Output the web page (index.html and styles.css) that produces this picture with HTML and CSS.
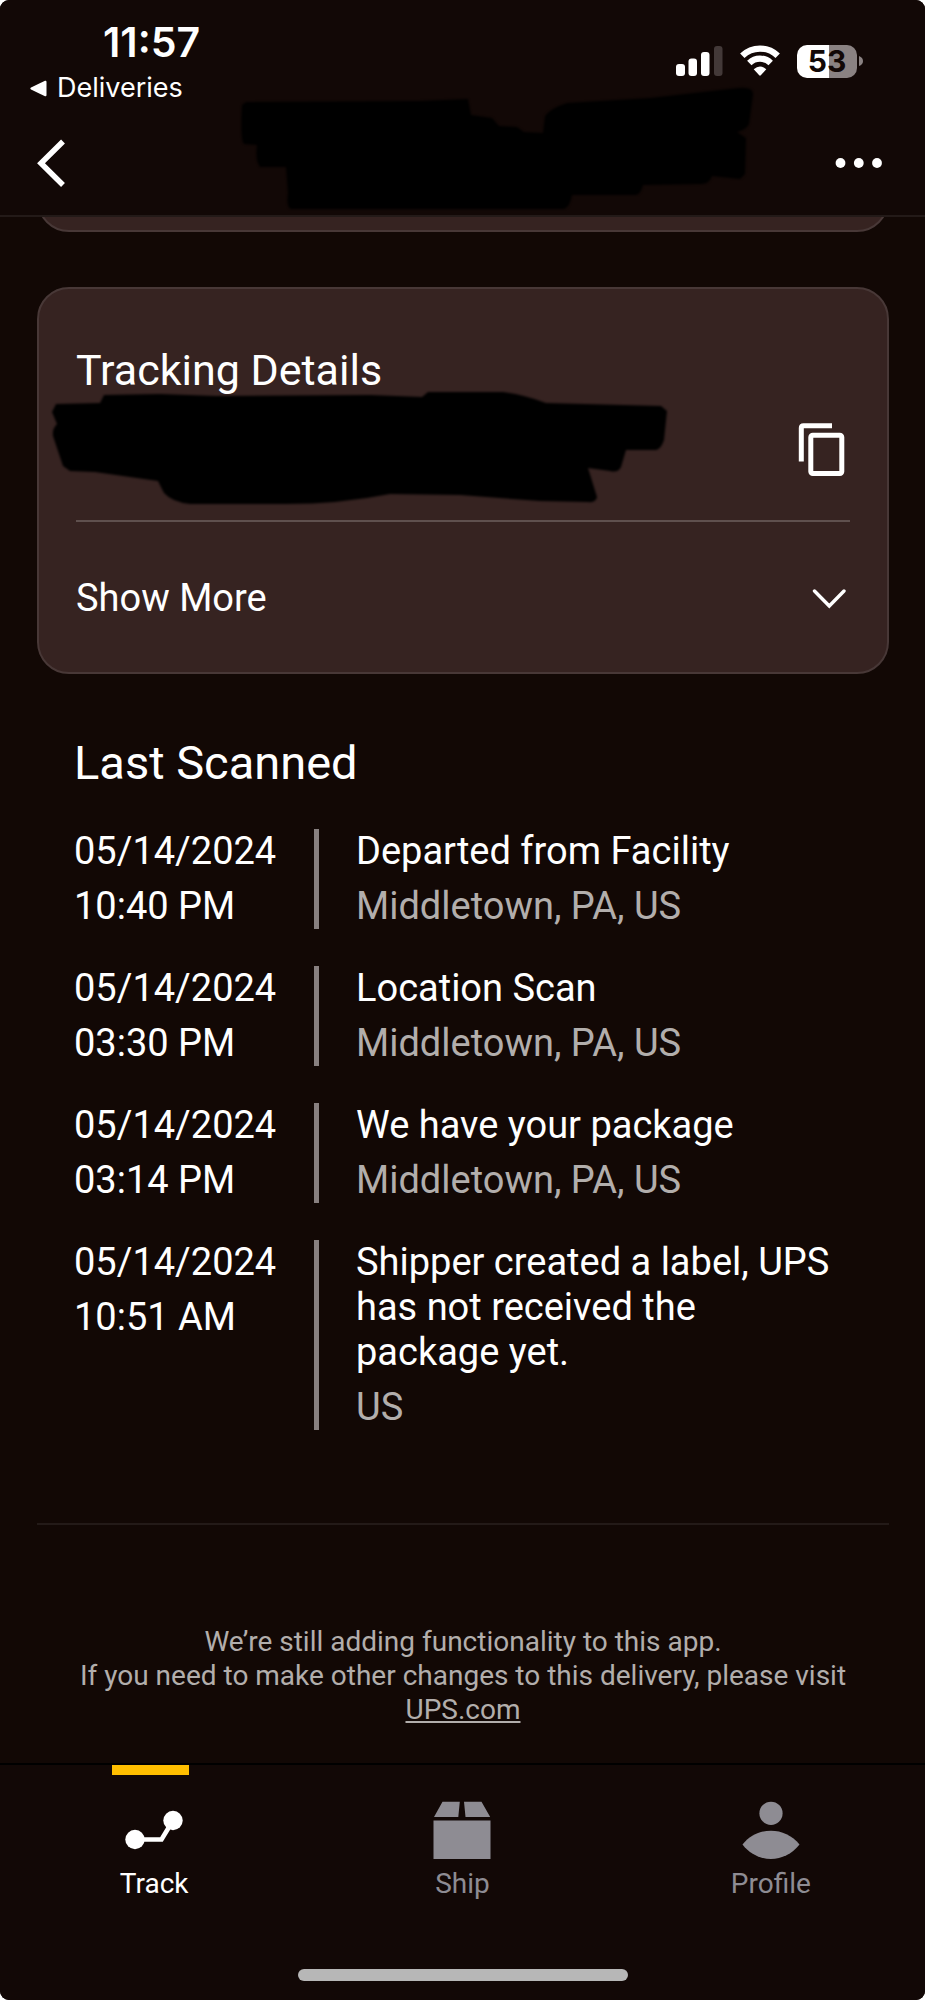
FILE: index.html
```html
<!DOCTYPE html>
<html lang="en">
<head>
<meta charset="utf-8">
<meta name="viewport" content="width=device-width, initial-scale=1">
<title>Tracking Details</title>
<link rel="stylesheet" href="styles.css">
</head>
<body>
<div class="app">
  <header class="header">
    <div class="status">
      <div class="status-left">
        <span class="clock">11:57</span>
        <a class="return-link" href="#">
          <svg width="17" height="17" viewBox="0 0 17 17" aria-hidden="true"><path d="M1 7.6 15 .8Q16.5.3 16.5 2v13q0 1.700-1.500 1.200L1 9.400Q-.4 8.500 1 7.600Z" fill="#fff"/></svg>
          Deliveries
        </a>
      </div>
      <div class="status-icons">
        <svg width="47" height="32" viewBox="0 0 47 32" aria-hidden="true">
          <g fill="#fff"><rect x="0" y="19" width="9" height="12" rx="3"/><rect x="12.500" y="13.500" width="8.500" height="17.500" rx="3"/><rect x="25" y="7" width="8.500" height="24" rx="3"/></g>
          <rect x="38" y="1" width="8.500" height="30" rx="3" fill="#433938"/>
        </svg>
        <svg width="40" height="32" viewBox="0 0 40 32" aria-hidden="true">
          <g fill="none" stroke="#fff" stroke-width="6.300"><path d="M2.300 10.700A25.500 25.500 0 0 1 37.700 10.700"/><path d="M9.300 18A15.400 15.400 0 0 1 30.700 18"/></g>
          <path d="M13.700 24.300Q20 18.700 26.300 24.300L20.800 30.300Q20 31.200 19.200 30.300Z" fill="#fff"/>
        </svg>
        <div class="battery">
          <span class="battery-body">53</span>
          <svg width="4" height="12" viewBox="0 0 4 12" aria-hidden="true"><path d="M0 1Q4 2.500 4 6T0 11Z" fill="#8a8282"/></svg>
        </div>
      </div>
    </div>
    <nav class="nav">
      <button class="icon-button" type="button" aria-label="Back">
        <svg width="29" height="48" viewBox="0 0 29 48" aria-hidden="true"><path d="M26 2.500 4 24.200 26 46" fill="none" stroke="#fff" stroke-width="5.500"/></svg>
      </button>
      <button class="icon-button" type="button" aria-label="More options">
        <svg width="48" height="12" viewBox="0 0 48 12" aria-hidden="true"><g fill="#fff"><circle cx="5.500" cy="6" r="4.900"/><circle cx="23.800" cy="6" r="4.900"/><circle cx="42" cy="6" r="4.900"/></g></svg>
      </button>
    </nav>
    <svg class="mask mask-header" width="525" height="136" viewBox="235 80 525 136" aria-hidden="true">
      <path d="M246 101 420 100 468 98 471 114 492 117 499 125 517 126 524 131 543 132 545 115Q551 107 567 102L650 97 738 87Q754 85 753 94L749 123Q746 129 737 131L746 137 745 173 740 178 712 175Q710 182 702 183L643 184Q641 193 636 194L572 194Q570 206 564 208L291 208Q286 206 288 192L286 166 260 166Q255 160 257 144L244 143Q240 139 242 104Z"/>
    </svg>
  </header>

  <main class="content">
    <div class="card card-previous"></div>

    <section class="card details">
      <h2 class="details-title">Tracking Details</h2>
      <div class="number-row">
        <svg class="mask mask-number" width="635" height="130" viewBox="45 384 635 130" aria-hidden="true">
          <path d="M56 404 100 403 104 395 160 394 215 396 370 395 422 397 428 392 503 392Q525 395 546 403L661 406 667 411 664 440Q661 449 656 450L626 450 621 467Q618 473 610 471L588 468 597 497Q596 503 588 502L540 501 460 495 390 494Q340 504 285 504L190 504Q172 502 164 493L158 481 95 472 70 471 63 466 53 436Q52 429 57 424L52 412Z"/>
        </svg>
        <button class="icon-button" type="button" aria-label="Copy tracking number">
          <svg width="52" height="54" viewBox="0 0 52 54" aria-hidden="true"><g fill="none" stroke="#fff" stroke-width="5"><path d="M34 2.800H5.500Q3.300 2.800 3.300 5v33.500"/><rect x="12.800" y="12.300" width="31" height="38.200" rx="2"/></g></svg>
        </button>
      </div>
      <button class="show-more" type="button">
        Show More
        <svg width="38" height="20" viewBox="0 0 38 20" aria-hidden="true"><path d="M2.500 2 17.300 17 32 2" fill="none" stroke="#fff" stroke-width="3.400" stroke-linecap="round"/></svg>
      </button>
    </section>

    <section class="scans">
      <h2 class="scans-title">Last Scanned</h2>
      <ol class="scan-list">
        <li class="scan">
          <div class="when"><span>05/14/2024</span><span>10:40 PM</span></div>
          <div class="what"><span>Departed from Facility</span><span class="place">Middletown, PA, US</span></div>
        </li>
        <li class="scan">
          <div class="when"><span>05/14/2024</span><span>03:30 PM</span></div>
          <div class="what"><span>Location Scan</span><span class="place">Middletown, PA, US</span></div>
        </li>
        <li class="scan">
          <div class="when"><span>05/14/2024</span><span>03:14 PM</span></div>
          <div class="what"><span>We have your package</span><span class="place">Middletown, PA, US</span></div>
        </li>
        <li class="scan">
          <div class="when"><span>05/14/2024</span><span>10:51 AM</span></div>
          <div class="what"><span>Shipper created a label, UPS has not received the package yet.</span><span class="place">US</span></div>
        </li>
      </ol>
    </section>

    <p class="notice">We’re still adding functionality to this app.<br>If you need to make other changes to this delivery, please visit<br><a href="#">UPS.com</a></p>
  </main>

  <footer class="tabbar">
    <div class="indicator"></div>
    <nav class="tabs">
      <a class="tab tab-active" href="#">
        <svg width="58" height="58" viewBox="0 0 58 58" aria-hidden="true"><g fill="currentColor"><circle cx="10" cy="38.500" r="9.700"/><circle cx="48" cy="19.500" r="9.700"/></g><path d="M10 38.500H36.500L48 19.500" fill="none" stroke="currentColor" stroke-width="4.600"/></svg>
        Track
      </a>
      <a class="tab" href="#">
        <svg width="58" height="58" viewBox="0 0 58 58" aria-hidden="true"><path fill="currentColor" d="M.5 19.500h57V58H.5ZM9.500.7H26.800L25.300 16H1ZM31 .7H48.500L57.200 16H32.500Z"/></svg>
        Ship
      </a>
      <a class="tab" href="#">
        <svg width="58" height="58" viewBox="0 0 58 58" aria-hidden="true"><g fill="currentColor"><circle cx="29" cy="12.300" r="11.600"/><path d="M.5 43.500C15 25 43 25 57.500 43.500C43 62.700 15 62.700.5 43.500Z"/></g></svg>
        Profile
      </a>
    </nav>
    <div class="home-indicator"></div>
  </footer>
</div>
</body>
</html>
```

FILE: styles.css
```css
* {
  box-sizing: border-box;
}

body {
  margin: 0;
  background: #fff;
  color: #fff;
  font-family: Roboto, "Liberation Sans", sans-serif;
  font-size: 38px;
  line-height: 45px;
}

h2,
p,
ol {
  margin: 0;
  padding: 0;
  font-weight: 400;
}

a {
  color: inherit;
}

svg {
  display: block;
}

button {
  padding: 0;
  border: 0;
  background: none;
  color: inherit;
  font: inherit;
  cursor: pointer;
}

.app {
  display: flex;
  flex-direction: column;
  min-height: 100vh;
  overflow: hidden;
  border-radius: 9px;
  background: #120805;
}

/* Header */
.header {
  position: relative;
  z-index: 1;
  border-bottom: 2px solid #231a18;
  background: #120806;
}

.status {
  display: flex;
  justify-content: space-between;
  align-items: center;
  padding: 18px 62px 8px 30px;
  font-family: Inter, "Liberation Sans", sans-serif;
}

.status-left {
  display: flex;
  flex-direction: column;
  gap: 6px;
}

.clock {
  padding-left: 73px;
  font-size: 41px;
  font-weight: 600;
  line-height: 48px;
}

.return-link {
  display: flex;
  align-items: center;
  gap: 10px;
  font-size: 27px;
  line-height: 32px;
  text-decoration: none;
}

.status-icons {
  display: flex;
  align-items: center;
  gap: 17px;
}

.battery {
  display: flex;
  align-items: center;
  gap: 2px;
}

.battery-body {
  width: 60px;
  border-radius: 10px;
  background: linear-gradient(90deg, #fff 53%, #8a8282 53%);
  color: #120806;
  font-size: 30px;
  font-weight: 700;
  line-height: 33px;
  text-align: center;
}

.nav {
  display: flex;
  justify-content: space-between;
  align-items: center;
  height: 103px;
  padding: 0 42px 2px 37px;
}

.mask {
  position: absolute;
  filter: blur(1px);
  fill: #000;
}

.mask-header {
  top: 81px;
  right: 0;
  left: 70px;
  margin: 0 auto;
}

/* Cards */
.content {
  flex: 1;
  padding: 0 36px 36px 37px;
}

.card {
  border: 2px solid #483837;
  border-radius: 32px;
  background: #362321;
}

.card-previous {
  height: 80px;
  margin: -65px 0 55px;
}

.details {
  padding: 56px 37px 51px;
}

.details-title {
  font-size: 43px;
  line-height: 50px;
}

.number-row {
  position: relative;
  display: flex;
  justify-content: flex-end;
  align-items: center;
  height: 127px;
  padding-bottom: 15px;
  border-bottom: 2px solid #5f504e;
}

.mask-number {
  top: -11px;
  left: -31px;
}

.show-more {
  display: flex;
  justify-content: space-between;
  align-items: center;
  width: 100%;
  padding-top: 54px;
}

/* Scan history */
.scans {
  padding: 61px 54px 93px 37px;
  border-bottom: 2px solid #231a18;
}

.scans-title {
  margin-bottom: 38px;
  font-size: 47px;
  line-height: 56px;
}

.scan-list {
  display: grid;
  gap: 37px;
  list-style: none;
}

.scan {
  display: grid;
  grid-template-columns: 240px 1fr;
}

.when,
.what {
  display: flex;
  flex-direction: column;
  gap: 10px;
}

.what {
  padding-left: 37px;
  border-left: 5px solid #888080;
}

.place {
  color: #b2aeac;
}

.notice {
  padding-top: 100px;
  color: #b2aeac;
  font-size: 28px;
  line-height: 34px;
  text-align: center;
}

/* Tab bar */
.tabbar {
  padding-bottom: 19px;
  border-top: 2px solid #000;
  background: #120806;
}

.indicator {
  padding-left: 112px;
}

.indicator::before {
  display: block;
  width: 77px;
  height: 10px;
  background: #ffbe00;
  content: "";
}

.tabs {
  display: grid;
  grid-template-columns: repeat(3, 1fr);
  padding: 26px 0 68px;
}

.tab {
  display: flex;
  flex-direction: column;
  align-items: center;
  gap: 8px;
  color: #8e8c93;
  font-size: 28px;
  line-height: 34px;
  text-decoration: none;
}

.tab-active {
  color: #fff;
}

.home-indicator {
  width: 330px;
  height: 12px;
  margin: 0 auto;
  border-radius: 6px;
  background: #b7b7b7;
}
```
